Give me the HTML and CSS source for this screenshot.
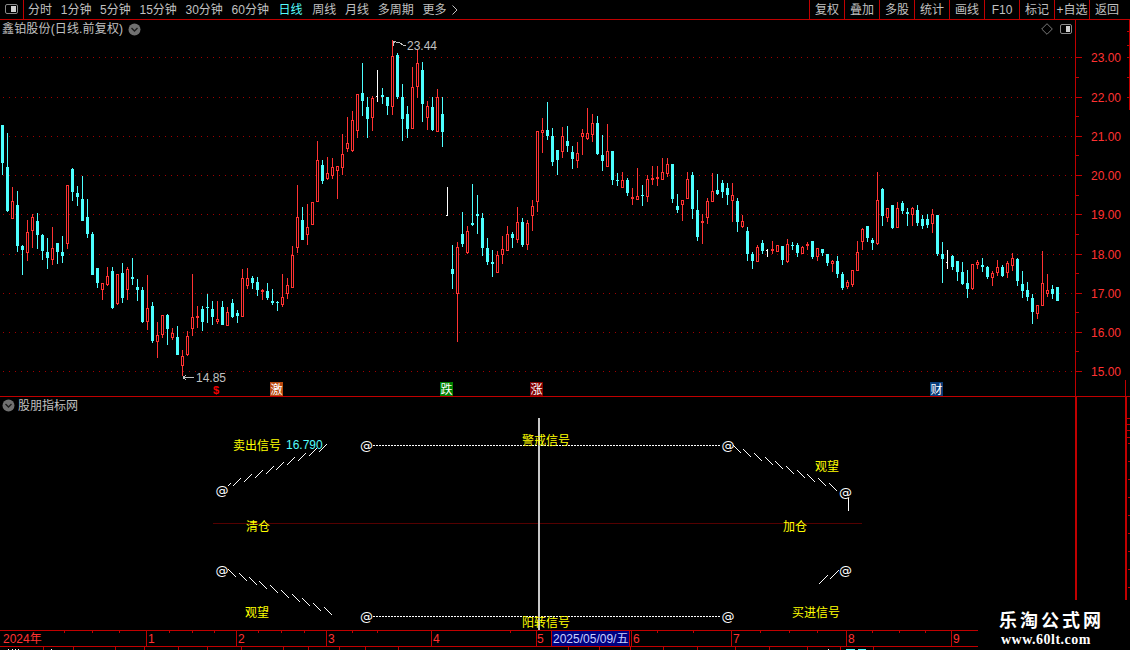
FILE: index.html
```html
<!DOCTYPE html>
<html lang="zh-CN">
<head>
<meta charset="utf-8">
<title>鑫铂股份</title>
<link rel="stylesheet" href="styles.css">
</head>
<body>
<div class="app">
  <header class="toolbar">
    <div class="tool-icon">
      <svg class="icon-panel" width="14" height="11" viewBox="0 0 14 11"><rect x="0.5" y="0.5" width="12" height="9" rx="1.5" class="pi-frame"/><rect x="6" y="2" width="5" height="6" class="pi-fill"/></svg>
    </div>
    <nav class="periods">
      <span class="period">分时</span>
      <span class="period">1分钟</span>
      <span class="period">5分钟</span>
      <span class="period">15分钟</span>
      <span class="period">30分钟</span>
      <span class="period">60分钟</span>
      <span class="period active">日线</span>
      <span class="period">周线</span>
      <span class="period">月线</span>
      <span class="period">多周期</span>
      <span class="period">更多</span>
      <svg class="more-arrow" width="6" height="10" viewBox="0 0 6 10"><path d="M0.5 0.5L5 5L0.5 9.5" class="more-path"/></svg>
    </nav>
    <div class="actions">
      <span class="action">复权</span>
      <span class="action">叠加</span>
      <span class="action">多股</span>
      <span class="action">统计</span>
      <span class="action">画线</span>
      <span class="action">F10</span>
      <span class="action">标记</span>
      <span class="action">+自选</span>
      <span class="action">返回</span>
    </div>
  </header>

  <section class="panel price-panel">
    <svg id="price-chart" class="canvas" width="1130" height="376" viewBox="0 20 1130 376" shape-rendering="crispEdges">
      <g id="grid"></g>
      <g id="candles"></g>
      <path class="red-line" d="M1075.5 20V396M1075 57.5h7M1075 97.5h7M1075 136.5h7M1075 175.5h7M1075 214.5h7M1075 254.5h7M1075 293.5h7M1075 332.5h7M1075 371.5h7M1075 77.5h4M1075 116.5h4M1075 155.5h4M1075 195.5h4M1075 234.5h4M1075 273.5h4M1075 312.5h4M1075 351.5h4"/>
      <path class="red-line" d="M1129.5 20V110M1127 31.5h3M1127 45.5h3M1127 57.5h3M1127 77.5h3M1127 97.5h3M1125.5 380V396"/>
      <g class="price-labels">
        <text x="1091" y="62">23.00</text>
        <text x="1091" y="102">22.00</text>
        <text x="1091" y="141">21.00</text>
        <text x="1091" y="180">20.00</text>
        <text x="1091" y="219">19.00</text>
        <text x="1091" y="259">18.00</text>
        <text x="1091" y="298">17.00</text>
        <text x="1091" y="337">16.00</text>
        <text x="1091" y="376">15.00</text>
      </g>
      <path class="note-line" d="M393 46V41H396M393 41L395 43M396 42H399L403 45H406"/>
      <text class="note" x="407" y="50">23.44</text>
      <path class="note-line" d="M183 377.5H194M183 377.5L186 375M183 377.5L186 380"/>
      <text class="note" x="196" y="382">14.85</text>
      <text class="mark-dollar" x="213" y="394">$</text>
      <rect class="mark-orange" x="270" y="382" width="13" height="14"/>
      <text class="mark-text" x="270.5" y="393.5">激</text>
      <rect class="mark-green" x="440" y="382" width="13" height="14"/>
      <text class="mark-text" x="440.5" y="393.5">跌</text>
      <rect class="mark-red" x="530" y="382" width="13" height="14"/>
      <text class="mark-text" x="530.5" y="393.5">涨</text>
      <rect class="mark-blue" x="930" y="382" width="13" height="14"/>
      <text class="mark-text" x="930.5" y="393.5">财</text>
    </svg>
    <div class="panel-head">
      <span class="title">鑫铂股份(日线.前复权)</span>
      <svg class="chevron" width="13" height="13" viewBox="0 0 13 13"><circle cx="6.5" cy="6.5" r="6" class="chev-disc"/><path d="M3.5 5L6.5 8L9.5 5" class="chev-mark"/></svg>
      <span class="head-tools">
        <svg width="12" height="12" viewBox="0 0 12 12"><path d="M6 0.7L11.3 6L6 11.3L0.7 6Z" class="diamond"/></svg>
        <svg width="13" height="11" viewBox="0 0 13 11"><rect x="0.5" y="0.5" width="11" height="9" rx="1.5" class="pi-frame"/><rect x="6" y="2" width="4" height="6" class="pi-fill"/></svg>
      </span>
    </div>
  </section>

  <section class="panel ind-panel">
    <svg class="canvas" width="1130" height="233" viewBox="0 397 1130 233">
      <g shape-rendering="crispEdges">
        <rect class="red-fill" x="1075" y="397" width="2" height="233"/>
        <rect class="red-fill" x="1125" y="397" width="2" height="233"/>
        <path class="red-line" d="M1127 418.5h3M1127 437.5h3M1127 424.5h3M1127 430.5h3M1128 443.5h2M1128 461.5h2M1128 479.5h2M1128 497.5h2M1128 515.5h2M1128 533.5h2M1128 551.5h2M1128 569.5h2M1128 587.5h2"/>
        <path class="zero-line" d="M213 523.5H862"/>
        <path class="signal" d="M227.5 486.5l3-3M232.5 486.5l8-8M243.5 482.5l8-8M254.5 478.5l8-8M265.5 474.5l8-8M275.5 470.5l8-8M286.5 465.5l8-8M297.5 461.5l8-8M308.5 456.5l8-8M318.5 452.5l8-8"/>
        <path class="signal" d="M228.5 569.5l8 8M239.5 573.5l8 8M249.5 577.5l8 8M259.5 581.5l8 8M270.5 585.5l8 8M281.5 590.5l8 8M292.5 594.5l8 8M302.5 598.5l8 8M313.5 603.5l8 8M324.5 607.5l8 8"/>
        <path class="signal" d="M733.5 445.5l8 8M743.5 449.5l8 8M754.5 453.5l8 8M765.5 457.5l8 8M775.5 461.5l8 8M786.5 466.5l8 8M797.5 470.5l8 8M807.5 474.5l8 8M818.5 478.5l8 8M829.5 483.5l8 8"/>
        <path class="signal" d="M838.5 570.5l-9 9M827.5 575.5l-9 9"/>
        <path class="dash" d="M373 445.5H721M373 616.5H721"/>
        <path class="signal" d="M848.5 498V511"/>
      </g>
      <g class="at">
        <text x="222" y="495">@</text>
        <text x="366.5" y="450">@</text>
        <text x="728" y="450">@</text>
        <text x="845.5" y="497">@</text>
        <text x="222" y="574.5">@</text>
        <text x="366.5" y="621">@</text>
        <text x="728" y="621">@</text>
        <text x="845.5" y="574.5">@</text>
      </g>
      <rect class="cursor" x="538" y="418" width="2" height="212" shape-rendering="crispEdges"/>
      <g class="signal-text">
        <text x="233" y="450">卖出信号</text>
        <text x="522" y="445">警戒信号</text>
        <text x="815" y="471">观望</text>
        <text x="246" y="531">清仓</text>
        <text x="783" y="531">加仓</text>
        <text x="245" y="617">观望</text>
        <text x="522" y="627">阳转信号</text>
        <text x="792" y="617">买进信号</text>
      </g>
      <text class="value" x="286" y="449">16.790</text>
    </svg>
    <div class="panel-head ind-head">
      <svg class="chevron-left" width="13" height="13" viewBox="0 0 13 13"><circle cx="6.5" cy="6.5" r="6" class="chev-disc"/><path d="M3.5 5L6.5 8L9.5 5" class="chev-mark"/></svg>
      <span class="title">股朋指标网</span>
    </div>
  </section>

  <footer class="axis">
    <svg width="1130" height="20" viewBox="0 630 1130 20" shape-rendering="crispEdges">
      <rect class="date-box" x="552" y="631" width="77" height="15"/>
      <path class="red-line" d="M0 630.5H1130M0 646.5H1130"/>
      <path class="red-line" d="M146.5 630V646M236.5 630V646M326.5 630V646M431.5 630V646M536.5 630V646M551.5 630V646M629.5 630V646M631.5 630V646M731.5 630V646M846.5 630V646M951.5 630V646"/>
      <path class="red-line" d="M64.5 630V633M92.5 630V633M119.5 630V633M169.5 630V633M192.5 630V633M214.5 630V633M258.5 630V633M281.5 630V633M304.5 630V633M352.5 630V633M377.5 630V633M510.5 630V633M657.5 630V633M693.5 630V633M760.5 630V633M789.5 630V633M817.5 630V633M872.5 630V633M899.5 630V633M925.5 630V633"/>
      <path class="red-line" d="M43.5 647V650M73.5 647V650M115.5 647V650M144.5 647V650M178.5 647V650M207.5 647V650M241.5 647V650M283.5 647V650M308.5 647V650M339.5 647V650M365.5 647V650M398.5 647V650M568.5 647V650M599.5 647V650M630.5 647V650M663.5 647V650M697.5 647V650M735.5 647V650M769.5 647V650M807.5 647V650M840.5 647V650M873.5 647V650"/>
      <path class="stub-white" d="M8 649h1M12 649h1M15 649h1M18 649h1M51 649h1M828 649h1"/>
      <path class="stub-cyan" d="M846 649h9M858 649h8"/>
      <g class="axis-labels">
        <text x="3" y="643">2024年</text>
        <text x="148" y="643">1</text>
        <text x="238" y="643">2</text>
        <text x="328" y="643">3</text>
        <text x="433" y="643">4</text>
        <text x="537" y="643">5</text>
        <text x="633" y="643">6</text>
        <text x="733" y="643">7</text>
        <text x="848" y="643">8</text>
        <text x="953" y="643">9</text>
      </g>
      <text class="date-text" x="553" y="643">2025/05/09/五</text>
    </svg>
  </footer>

  <aside class="watermark">
    <span class="wm-title">乐淘公式网</span>
    <span class="wm-url">www.60lt.com</span>
  </aside>
</div>
<script src="chart.js"></script>
</body>
</html>
```

FILE: styles.css
```css
* { box-sizing: border-box; }
html, body { margin: 0; padding: 0; background: #000; overflow: hidden; }
body { width: 1130px; height: 650px; }
.app {
  position: relative;
  width: 1130px;
  height: 650px;
  display: flex;
  flex-direction: column;
  overflow: hidden;
  background: #000;
  color: #c0c0c0;
  font: 12px/1 "Liberation Sans", "Noto Sans CJK SC", sans-serif;
}
svg { display: block; }
svg text { font-family: "Liberation Sans", "Noto Sans CJK SC", sans-serif; font-size: 12px; }

/* toolbar */
.toolbar {
  flex: 0 0 20px;
  display: flex;
  align-items: stretch;
  border-bottom: 1px solid #c00000;
  padding-right: 6px;
}
.tool-icon {
  width: 24px;
  border-right: 1px solid #c00000;
  display: flex;
  align-items: center;
  justify-content: center;
}
.periods {
  display: flex;
  align-items: center;
  gap: 8.7px;
  margin-left: 4px;
}
.period.active { color: #54fcfc; }
.period.active, .period.active + .period { margin-left: 1px; }
.more-arrow { margin-left: -3px; }
.more-path { fill: none; stroke: #c0c0c0; }
.actions { margin-left: auto; display: flex; align-items: stretch; }
.action {
  width: 35px;
  display: flex;
  align-items: center;
  justify-content: center;
  border-left: 1px solid #c00000;
  white-space: nowrap;
}
.pi-frame { fill: none; stroke: #8a8a8a; }
.pi-fill { fill: #d0d0d0; }

/* panels */
.panel { position: relative; }
.price-panel { flex: 0 0 377px; border-bottom: 1px solid #c00000; }
.ind-panel { flex: 0 0 233px; }
.canvas { position: absolute; left: 0; top: 0; }
.panel-head {
  position: relative;
  height: 18px;
  display: flex;
  align-items: center;
  padding-left: 2px;
}
.panel-head .title { font-size: 12px; white-space: nowrap; }
.price-panel .title { letter-spacing: 0.16px; }
.chevron { margin-left: 5px; }
.ind-head { height: 17px; margin-top: 0; }
.chevron-left { margin-right: 3px; }
.chev-disc { fill: #707070; }
.chev-mark { fill: none; stroke: #1c1c1c; stroke-width: 1.4; }
.head-tools {
  margin-left: auto;
  margin-right: 57px;
  display: flex;
  align-items: center;
  gap: 7px;
}
.diamond { fill: none; stroke: #7a7a7a; }

/* chart */
.grid-line { stroke: #a00000; stroke-dasharray: 1 5; }
.wick-red { fill: #ff3232; }
.wick-cyan { fill: #4dffff; }
.wick-white { fill: #ffffff; }
.body-red { fill: #000; stroke: #ff3232; }
.red-line { stroke: #c00000; fill: none; }
.red-fill { fill: #c00000; }
.price-labels text, .axis-labels text { fill: #ff3232; }
.note { fill: #c0c0c0; }
.note-line { stroke: #c0c0c0; fill: none; }
svg .mark-dollar { fill: #f00000; font-weight: 700; font-size: 11px; }
.mark-text { fill: #fff; }
.mark-orange { fill: #b84a10; }
.mark-green { fill: #008000; }
.mark-red { fill: #800000; }
.mark-blue { fill: #0a3c78; }

/* indicator */
.zero-line { stroke: #540000; fill: none; }
.signal { stroke: #fff; fill: none; stroke-width: 1; }
.dash { stroke: #fff; stroke-dasharray: 2 1; fill: none; }
svg .at text { fill: #fff; font-family: "DejaVu Sans", sans-serif; font-size: 13px; text-anchor: middle; }
.cursor { fill: #c8c8c8; }
.signal-text text { fill: #ffff00; }
.value { fill: #54fcfc; }

/* time axis */
.axis { flex: 0 0 20px; }
.date-box { fill: #000080; }
.date-text { fill: #c8d0ff; letter-spacing: 0; }
.stub-white { stroke: #fff; }
.stub-cyan { stroke: #54fcfc; }

/* watermark */
.watermark {
  position: absolute;
  right: 0;
  bottom: 0;
  width: 152px;
  height: 50px;
  background: #000;
  display: flex;
  flex-direction: column;
  padding: 9px 0 0 21px;
  gap: 3px;
  color: #fff;
}
.wm-title {
  font: 700 18px/20px "Noto Sans CJK SC", sans-serif;
  letter-spacing: 3px;
  white-space: nowrap;
}
.wm-url {
  font: 700 14px/15px "Liberation Serif", serif;
  letter-spacing: 0.5px;
  margin-left: 2px;
  white-space: nowrap;
}
```

FILE: chart.js
```js
// [wick top, body top, body bottom, wick bottom, kind] in chart pixels; kind 0 cyan, 1 red, 2 white
var CANDLES = [
[125,125,163,175,0],[133,167,211,212,0],[187,201,219,219,1],[191,205,246,252,0],[245,246,250,275,0],
[220,232,253,261,1],[214,217,231,248,1],[213,221,235,249,0],[234,235,251,260,0],[238,252,258,269,0],
[227,248,260,265,1],[243,243,252,264,0],[236,252,256,263,0],[185,185,244,249,1],[168,169,192,201,0],
[186,193,197,206,0],[176,199,221,221,0],[199,217,234,238,0],[232,234,275,275,0],[268,268,283,288,0],
[283,283,290,300,1],[267,276,285,286,1],[267,271,308,309,0],[274,274,304,305,1],[263,273,298,303,0],
[267,269,290,300,1],[258,277,279,285,0],[279,287,290,301,0],[287,290,322,323,0],[275,308,322,330,1],
[302,306,341,343,0],[322,335,342,358,1],[315,315,335,338,1],[314,315,329,345,0],[328,333,338,340,1],
[326,337,355,355,0],[350,356,366,376,1],[331,336,355,356,1],[274,317,329,336,1],[306,316,318,328,1],
[306,309,322,331,0],[294,307,308,323,0],[301,309,317,325,0],[301,319,322,324,1],[301,307,325,325,0],
[307,312,326,326,1],[299,303,317,318,0],[310,313,316,323,0],[269,278,317,317,1],[268,278,286,289,1],
[276,278,283,289,0],[277,282,290,296,0],[289,290,291,300,1],[283,291,298,300,0],[289,301,303,305,0],
[301,302,303,311,0],[274,297,305,307,1],[278,285,294,299,1],[246,255,288,288,1],[185,217,248,253,1],
[207,220,240,240,0],[204,227,235,245,1],[202,202,225,225,1],[141,160,202,202,1],[160,165,181,184,0],
[157,173,179,180,1],[158,167,176,179,1],[166,166,171,199,1],[134,154,168,175,1],[117,143,149,152,1],
[111,120,151,152,1],[94,94,131,138,1],[63,93,101,116,0],[97,107,119,138,0],[96,98,118,131,1],
[70,96,97,102,2],[88,95,97,104,0],[97,97,106,115,0],[40,56,107,115,1],[53,55,97,99,0],
[84,97,119,141,0],[106,114,129,138,0],[67,87,129,129,1],[49,63,87,98,1],[62,70,104,122,0],
[101,106,118,130,1],[97,107,130,131,0],[89,97,132,132,1],[97,114,132,147,0],[187,215,216,216,2],
[245,269,274,289,0],[242,247,294,342,1],[212,234,244,247,0],[226,231,253,254,1],[184,223,225,226,0],
[195,214,216,234,0],[213,218,248,256,0],[238,248,262,265,0],[250,262,264,277,0],[251,255,273,273,1],
[236,249,255,264,1],[226,234,251,251,1],[232,234,238,248,0],[207,222,240,243,1],[218,222,245,247,0],
[220,223,245,250,1],[200,206,216,231,1],[131,131,202,212,1],[118,130,133,153,1],[102,130,136,140,0],
[128,136,162,166,0],[150,150,160,175,0],[127,136,152,158,1],[126,141,146,152,0],[146,152,159,169,0],
[142,153,161,168,1],[129,133,137,155,1],[108,133,139,140,1],[114,123,135,142,1],[116,123,154,155,0],
[135,155,161,171,0],[124,151,167,167,1],[151,151,180,185,0],[173,180,181,186,0],[172,180,188,188,1],
[178,180,193,196,0],[188,197,199,205,1],[168,196,200,200,1],[185,195,196,206,0],[175,179,197,202,1],
[166,178,180,185,1],[166,177,179,186,1],[158,172,180,180,1],[158,164,174,177,1],[164,164,199,203,0],
[194,206,210,213,0],[200,200,205,221,1],[172,179,199,199,1],[172,175,209,219,0],[190,210,237,241,0],
[214,221,223,244,1],[198,201,218,224,1],[173,191,202,202,1],[174,190,194,195,0],[180,183,192,198,0],
[183,188,195,205,0],[183,195,201,222,1],[198,201,222,232,0],[215,221,227,228,1],[227,231,254,261,0],
[252,254,261,269,0],[245,247,262,262,1],[240,243,251,254,0],[249,250,251,257,2],[241,249,251,254,1],
[245,245,252,252,1],[246,246,260,265,0],[239,244,262,263,1],[242,245,246,250,0],[243,245,253,257,0],
[246,247,254,254,1],[242,244,246,250,1],[241,241,257,259,0],[248,248,257,261,1],[249,249,253,256,0],
[254,254,263,266,0],[260,261,264,272,1],[256,261,274,278,0],[272,274,288,290,0],[280,282,287,289,1],
[270,270,285,287,1],[241,252,271,271,1],[228,229,242,250,1],[226,226,238,242,0],[238,240,243,250,0],
[172,200,244,245,1],[188,189,216,226,0],[208,208,218,222,1],[205,205,228,229,0],[202,208,228,228,1],
[201,203,211,214,0],[208,212,214,226,0],[207,208,215,226,1],[205,210,223,226,0],[215,219,226,229,0],
[214,219,225,228,0],[209,214,224,233,1],[215,215,254,256,0],[242,254,259,283,0],[250,262,263,269,2],
[255,256,267,270,0],[261,261,272,281,0],[262,272,284,285,0],[270,283,289,298,0],[264,264,289,290,1],
[260,262,265,269,1],[258,265,267,272,0],[266,267,277,279,0],[271,273,278,286,1],[260,267,273,276,1],
[265,267,276,277,0],[261,263,273,278,1],[253,258,266,271,1],[258,259,281,286,0],[271,284,291,298,0],
[282,290,297,301,0],[294,298,312,324,0],[305,305,314,319,1],[251,283,306,306,1],[274,290,294,297,1],
[285,289,294,299,0],[287,287,301,301,0]
];
var GRID = [57, 97, 136, 175, 214, 254, 293, 332, 371];
var NS = "http://www.w3.org/2000/svg";

function add(parent, tag, attrs) {
  var el = document.createElementNS(NS, tag);
  for (var k in attrs) el.setAttribute(k, attrs[k]);
  parent.appendChild(el);
  return el;
}

var gridLayer = document.getElementById("grid");
GRID.forEach(function (y) {
  add(gridLayer, "line", { "class": "grid-line", x1: 3, x2: 1075, y1: y + 0.5, y2: y + 0.5 });
});

var layer = document.getElementById("candles");
var WICK = ["wick-cyan", "wick-red", "wick-white"];
CANDLES.forEach(function (c, i) {
  var left = 1 + 5 * i, wt = c[0], bt = c[1], bb = c[2], wb = c[3], kind = c[4];
  add(layer, "rect", { "class": WICK[kind], x: left + 1, y: wt, width: 1, height: Math.max(1, wb - wt) });
  if (kind === 1) {
    add(layer, "rect", { "class": "body-red", x: left + 0.5, y: bt + 0.5, width: 2, height: Math.max(1, bb - bt - 1) });
  } else if (kind === 0) {
    add(layer, "rect", { "class": "wick-cyan", x: left, y: bt, width: 3, height: Math.max(1, bb - bt) });
  } else {
    add(layer, "rect", { "class": "wick-white", x: left, y: bt, width: 2, height: 1 });
  }
});
```
